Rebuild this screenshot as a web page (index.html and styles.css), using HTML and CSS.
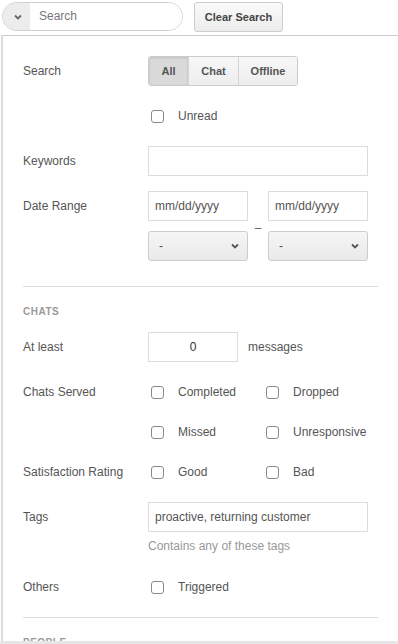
FILE: index.html
```html
<!DOCTYPE html>
<html lang="en">
<head>
    <meta charset="UTF-8">
    <title>Chat history search</title>
    <link rel="stylesheet" href="styles.css">
</head>
<body>
    <div class="page">
        <div class="topbar">
            <div class="search-pill">
                <span class="pill-toggle">
                    <svg width="8" height="6" viewBox="0 0 8 6"><path d="M1 1.5l3 3 3-3" fill="none" stroke="#666" stroke-width="1.8"/></svg>
                </span>
                <span class="pill-input">Search</span>
            </div>
            <button class="btn">Clear Search</button>
        </div>

        <div class="panel">
            <div class="panel-inner">
                <div class="row row-tight">
                    <span class="label">Search</span>
                    <div class="segmented">
                        <span class="seg seg-all active">All</span>
                        <span class="seg seg-chat">Chat</span>
                        <span class="seg seg-offline">Offline</span>
                    </div>
                </div>

                <div class="row row-loose">
                    <span class="label"></span>
                    <label class="check"><span class="box"></span>Unread</label>
                </div>

                <div class="row">
                    <span class="label">Keywords</span>
                    <div class="field field-wide"></div>
                </div>

                <div class="row row-date">
                    <span class="label">Date Range</span>
                    <div class="date-grid">
                        <div class="field field-date">mm/dd/yyyy</div>
                        <span></span>
                        <div class="field field-date">mm/dd/yyyy</div>
                        <div class="select">
                            <span>-</span>
                            <svg width="8" height="6" viewBox="0 0 8 6"><path d="M1 1.5l3 3 3-3" fill="none" stroke="#555" stroke-width="1.8"/></svg>
                        </div>
                        <span class="dash">–</span>
                        <div class="select">
                            <span>-</span>
                            <svg width="8" height="6" viewBox="0 0 8 6"><path d="M1 1.5l3 3 3-3" fill="none" stroke="#555" stroke-width="1.8"/></svg>
                        </div>
                    </div>
                </div>

                <div class="divider"></div>
                <div class="section-title">Chats</div>

                <div class="row row-atleast">
                    <span class="label">At least</span>
                    <div class="field field-num">0</div>
                    <span class="suffix">messages</span>
                </div>

                <div class="row row-check">
                    <span class="label">Chats Served</span>
                    <label class="check"><span class="box"></span>Completed</label>
                    <label class="check"><span class="box"></span>Dropped</label>
                </div>

                <div class="row row-check">
                    <span class="label"></span>
                    <label class="check"><span class="box"></span>Missed</label>
                    <label class="check"><span class="box"></span>Unresponsive</label>
                </div>

                <div class="row row-rating">
                    <span class="label">Satisfaction Rating</span>
                    <label class="check"><span class="box"></span>Good</label>
                    <label class="check"><span class="box"></span>Bad</label>
                </div>

                <div class="row row-tags">
                    <span class="label">Tags</span>
                    <div class="field field-wide field-text">proactive, returning customer</div>
                </div>
                <p class="hint">Contains any of these tags</p>

                <div class="row row-others">
                    <span class="label">Others</span>
                    <label class="check"><span class="box"></span>Triggered</label>
                </div>

                <div class="divider divider-2"></div>
                <div class="section-title">People</div>
            </div>
        </div>
        <div class="bottom-bar"></div>
    </div>
</body>
</html>
```

FILE: styles.css
```css
* {
    margin: 0;
    padding: 0;
    box-sizing: border-box;
}

body {
    font-family: "Liberation Sans", Arial, sans-serif;
    font-size: 12px;
    color: #555;
    background: #fff;
    height: 644px;
    overflow: hidden;
}

.page {
    height: 644px;
    display: flex;
    flex-direction: column;
}

/* top search bar */
.topbar {
    display: flex;
    align-items: flex-start;
    padding: 2px 0 0 2px;
}

.search-pill {
    display: flex;
    width: 181px;
    height: 29px;
    border: 1px solid #d0d0d0;
    border-radius: 15px;
    overflow: hidden;
}

.pill-toggle {
    width: 27px;
    background: #ececec;
    display: flex;
    align-items: center;
    justify-content: center;
    padding-left: 2px;
}

.pill-input {
    flex: 1;
    color: #777;
    line-height: 27px;
    padding-left: 9px;
    background: #fff;
}

.btn {
    margin-left: 11px;
    width: 89px;
    height: 30px;
    font-family: inherit;
    font-size: 11px;
    font-weight: bold;
    color: #444;
    background: linear-gradient(#fafafa, #ececec);
    border: 1px solid #ccc;
    border-radius: 3px;
}

/* filter panel */
.panel {
    flex: 1;
    overflow: hidden;
    margin-top: 3px;
    margin-left: 1px;
    border-top: 1px solid #ccc;
    border-left: 2px solid #dcdcdc;
}

.panel-inner {
    width: 375px;
    padding: 20px 0 0 20px;
}

.row {
    display: flex;
    align-items: center;
    min-height: 30px;
    margin-bottom: 15px;
}

.row-tight { margin-bottom: 15px; }
.row-loose { margin-bottom: 15px; }
.row-atleast { margin-bottom: 15px; }
.row-check { margin-bottom: 10px; }
.row-rating { margin-bottom: 15px; }
.row-tags { margin-bottom: 0; }
.row-others { margin-bottom: 0; }

.row-date {
    align-items: flex-start;
    margin-bottom: 0;
}

.row-date .label {
    line-height: 30px;
}

.label {
    width: 125px;
    flex-shrink: 0;
    color: #555;
}

/* segmented control */
.segmented {
    display: flex;
    height: 30px;
    border: 1px solid #ccc;
    border-radius: 3px;
    overflow: hidden;
}

.seg {
    display: flex;
    align-items: center;
    justify-content: center;
    font-size: 11px;
    font-weight: bold;
    color: #555;
    background: linear-gradient(#f7f7f7, #eeeeee);
    border-left: 1px solid #d4d4d4;
}

.seg-all { width: 39px; border-left: none; }
.seg-chat { width: 50px; }
.seg-offline { width: 59px; }

.seg.active {
    background: #dadada;
    box-shadow: inset 0 1px 3px rgba(0,0,0,0.12);
}

/* checkboxes */
.check {
    display: flex;
    align-items: center;
    width: 115px;
    color: #555;
}

.box {
    width: 13px;
    height: 13px;
    margin-left: 3px;
    margin-right: 14px;
    border: 1px solid #8a8a8a;
    border-radius: 3px;
    background: #fff;
}

/* text fields */
.field {
    height: 30px;
    border: 1px solid #dcdcdc;
    background: #fff;
    line-height: 28px;
    padding-left: 6px;
    color: #555;
}

.field-wide { width: 220px; }
.field-date { width: 100px; }
.field-text { color: #555; }

.field-num {
    width: 90px;
    padding-left: 0;
    text-align: center;
    color: #333;
}

.suffix {
    margin-left: 10px;
}

.date-grid {
    display: grid;
    grid-template-columns: 100px 20px 100px;
    row-gap: 10px;
}

.select {
    height: 30px;
    display: flex;
    align-items: center;
    justify-content: space-between;
    padding: 0 8px 0 10px;
    border: 1px solid #ccc;
    border-radius: 3px;
    background: linear-gradient(#f6f6f6, #e9e9e9);
    color: #555;
}

.dash {
    align-self: start;
    text-align: center;
    line-height: 14px;
    margin-top: -10px;
    color: #666;
}

/* sections */
.divider {
    width: 355px;
    height: 1px;
    background: #dcdcdc;
    margin-top: 25px;
}

.divider-2 {
    margin-top: 15px;
}

.section-title {
    margin: 19px 0 14px;
    font-size: 10px;
    line-height: 12px;
    font-weight: bold;
    letter-spacing: 0.5px;
    text-transform: uppercase;
    color: #9a9a9a;
}

.hint {
    margin: 7px 0 19px 125px;
    line-height: 14px;
    color: #999;
}

.bottom-bar {
    height: 3px;
    background: #e6e6e6;
}
```
